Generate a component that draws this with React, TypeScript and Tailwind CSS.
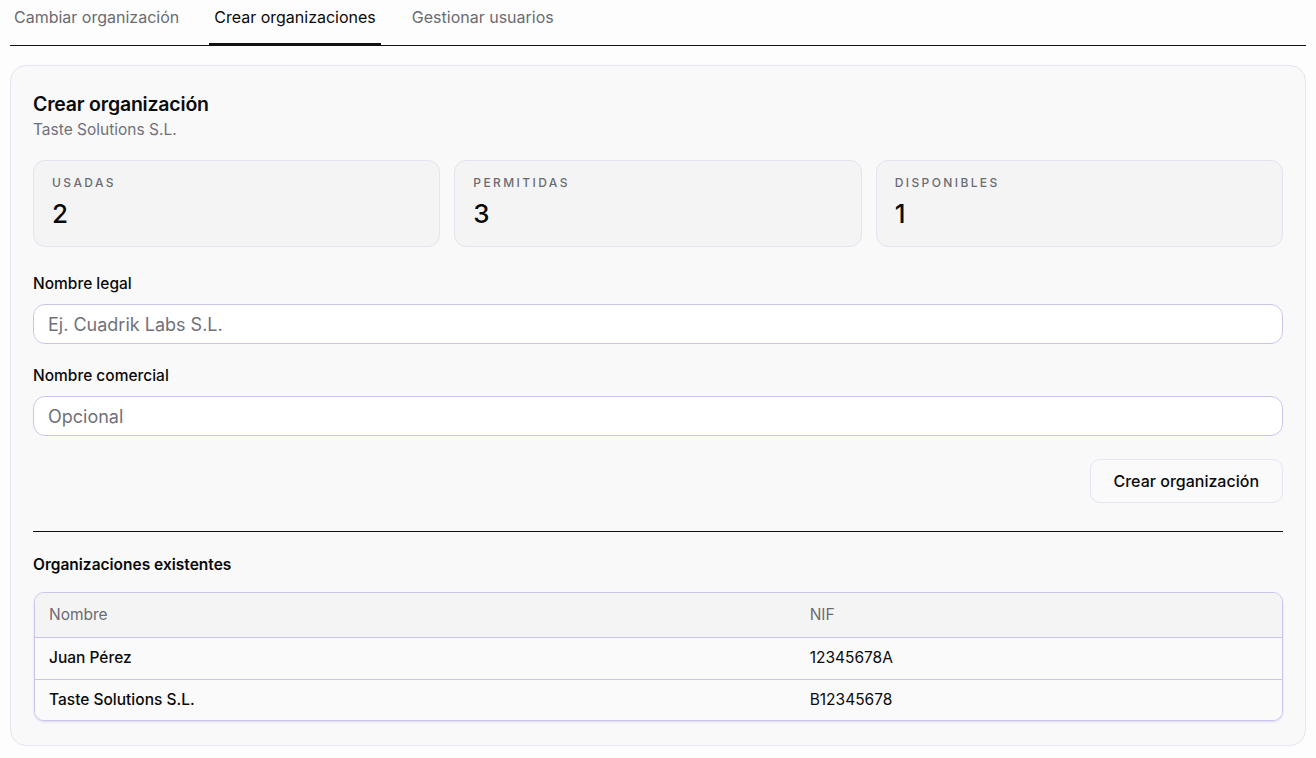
import React from "react";

const stats = [
  { label: "USADAS", value: "2" },
  { label: "PERMITIDAS", value: "3" },
  { label: "DISPONIBLES", value: "1" },
];

const rows = [
  { name: "Juan Pérez", nif: "12345678A" },
  { name: "Taste Solutions S.L.", nif: "B12345678" },
];

export default function App() {
  return (
    <div
      className="min-h-[758px] bg-[#fdfdfd] px-[10px] text-[#0a0a0a]"
      style={{ fontFamily: "Inter, 'Noto Sans', sans-serif" }}
    >
      <div className="flex gap-[26px] border-b border-[#111]">
        <button className="-mb-px px-[4px] pt-[6px] pb-[15px] text-[16px] leading-[22px] text-[#6b6b72] border-b-[3px] border-transparent">
          Cambiar organización
        </button>
        <button className="-mb-px px-[5px] pt-[6px] pb-[15px] text-[16px] leading-[22px] text-[#0a0a0a] border-b-[3px] border-[#111]">
          Crear organizaciones
        </button>
        <button className="-mb-px px-[5px] pt-[6px] pb-[15px] text-[16px] leading-[22px] text-[#6b6b72] border-b-[3px] border-transparent">
          Gestionar usuarios
        </button>
      </div>

      <div className="mt-[19px] rounded-[16px] border border-[#e6e5f2] bg-[#f9f9fa] px-[22px] pt-[24px] pb-[24px]">
        <h2 className="text-[19.5px] leading-[28px] font-semibold tracking-[-0.01em]">Crear organización</h2>
        <p className="mt-px text-[15.5px] leading-[22px] text-[#71717a]">Taste Solutions S.L.</p>

        <div className="mt-[19px] grid grid-cols-3 gap-[14px]">
          {stats.map((s) => (
            <div
              key={s.label}
              className="h-[87px] rounded-[12px] border border-[#e4e3ee] bg-[#f4f4f5] px-[18px] pt-[14px]"
            >
              <div className="text-[12px] leading-[16px] font-medium tracking-[0.2em] text-[#6b6b72]">
                {s.label}
              </div>
              <div className="mt-[7px] text-[26px] leading-[32px] font-medium">{s.value}</div>
            </div>
          ))}
        </div>

        <label className="mt-[26px] block text-[15.5px] leading-[22px] font-medium">Nombre legal</label>
        <input
          className="mt-[9px] block h-[40px] w-full rounded-[12px] border border-[#c9c6ee] bg-white px-[14px] text-[18px] outline-none placeholder:text-[#71717a]"
          placeholder="Ej. Cuadrik Labs S.L."
        />

        <label className="mt-[21px] block text-[15.5px] leading-[22px] font-medium">Nombre comercial</label>
        <input
          className="mt-[9px] block h-[40px] w-full rounded-[12px] border border-[#c9c6ee] bg-white px-[14px] text-[18px] outline-none placeholder:text-[#71717a]"
          placeholder="Opcional"
        />

        <div className="mt-[23px] flex justify-end">
          <button className="h-[44px] rounded-[10px] border border-[#e6e5f2] bg-[#fafafa] px-[23px] text-[16px] font-medium">
            Crear organización
          </button>
        </div>

        <div className="mt-[28px] h-px bg-[#111]" />

        <h3 className="mt-[22px] text-[15.5px] leading-[22px] font-semibold">Organizaciones existentes</h3>

        <div className="mt-[16px] ml-px overflow-hidden rounded-[10px] border border-[#c9c6ee] shadow-[0_1px_2px_rgba(120,110,200,0.25)]">
          <table className="w-full border-collapse text-left text-[15.5px]">
            <thead>
              <tr className="bg-[#f4f4f5]">
                <th className="h-[44px] w-[61%] px-[14px] font-normal text-[#6b6b72]">Nombre</th>
                <th className="h-[44px] px-[14px] font-normal text-[#6b6b72]">NIF</th>
              </tr>
            </thead>
            <tbody className="bg-[#fafafa]">
              {rows.map((r, i) => (
                <tr key={r.nif} className="border-t border-[#c9c6ee]">
                  <td className={i === 0 ? "h-[42px] px-[14px] font-medium" : "h-[41px] px-[14px] font-medium"}>
                    {r.name}
                  </td>
                  <td className="px-[14px]">{r.nif}</td>
                </tr>
              ))}
            </tbody>
          </table>
        </div>
      </div>
    </div>
  );
}
